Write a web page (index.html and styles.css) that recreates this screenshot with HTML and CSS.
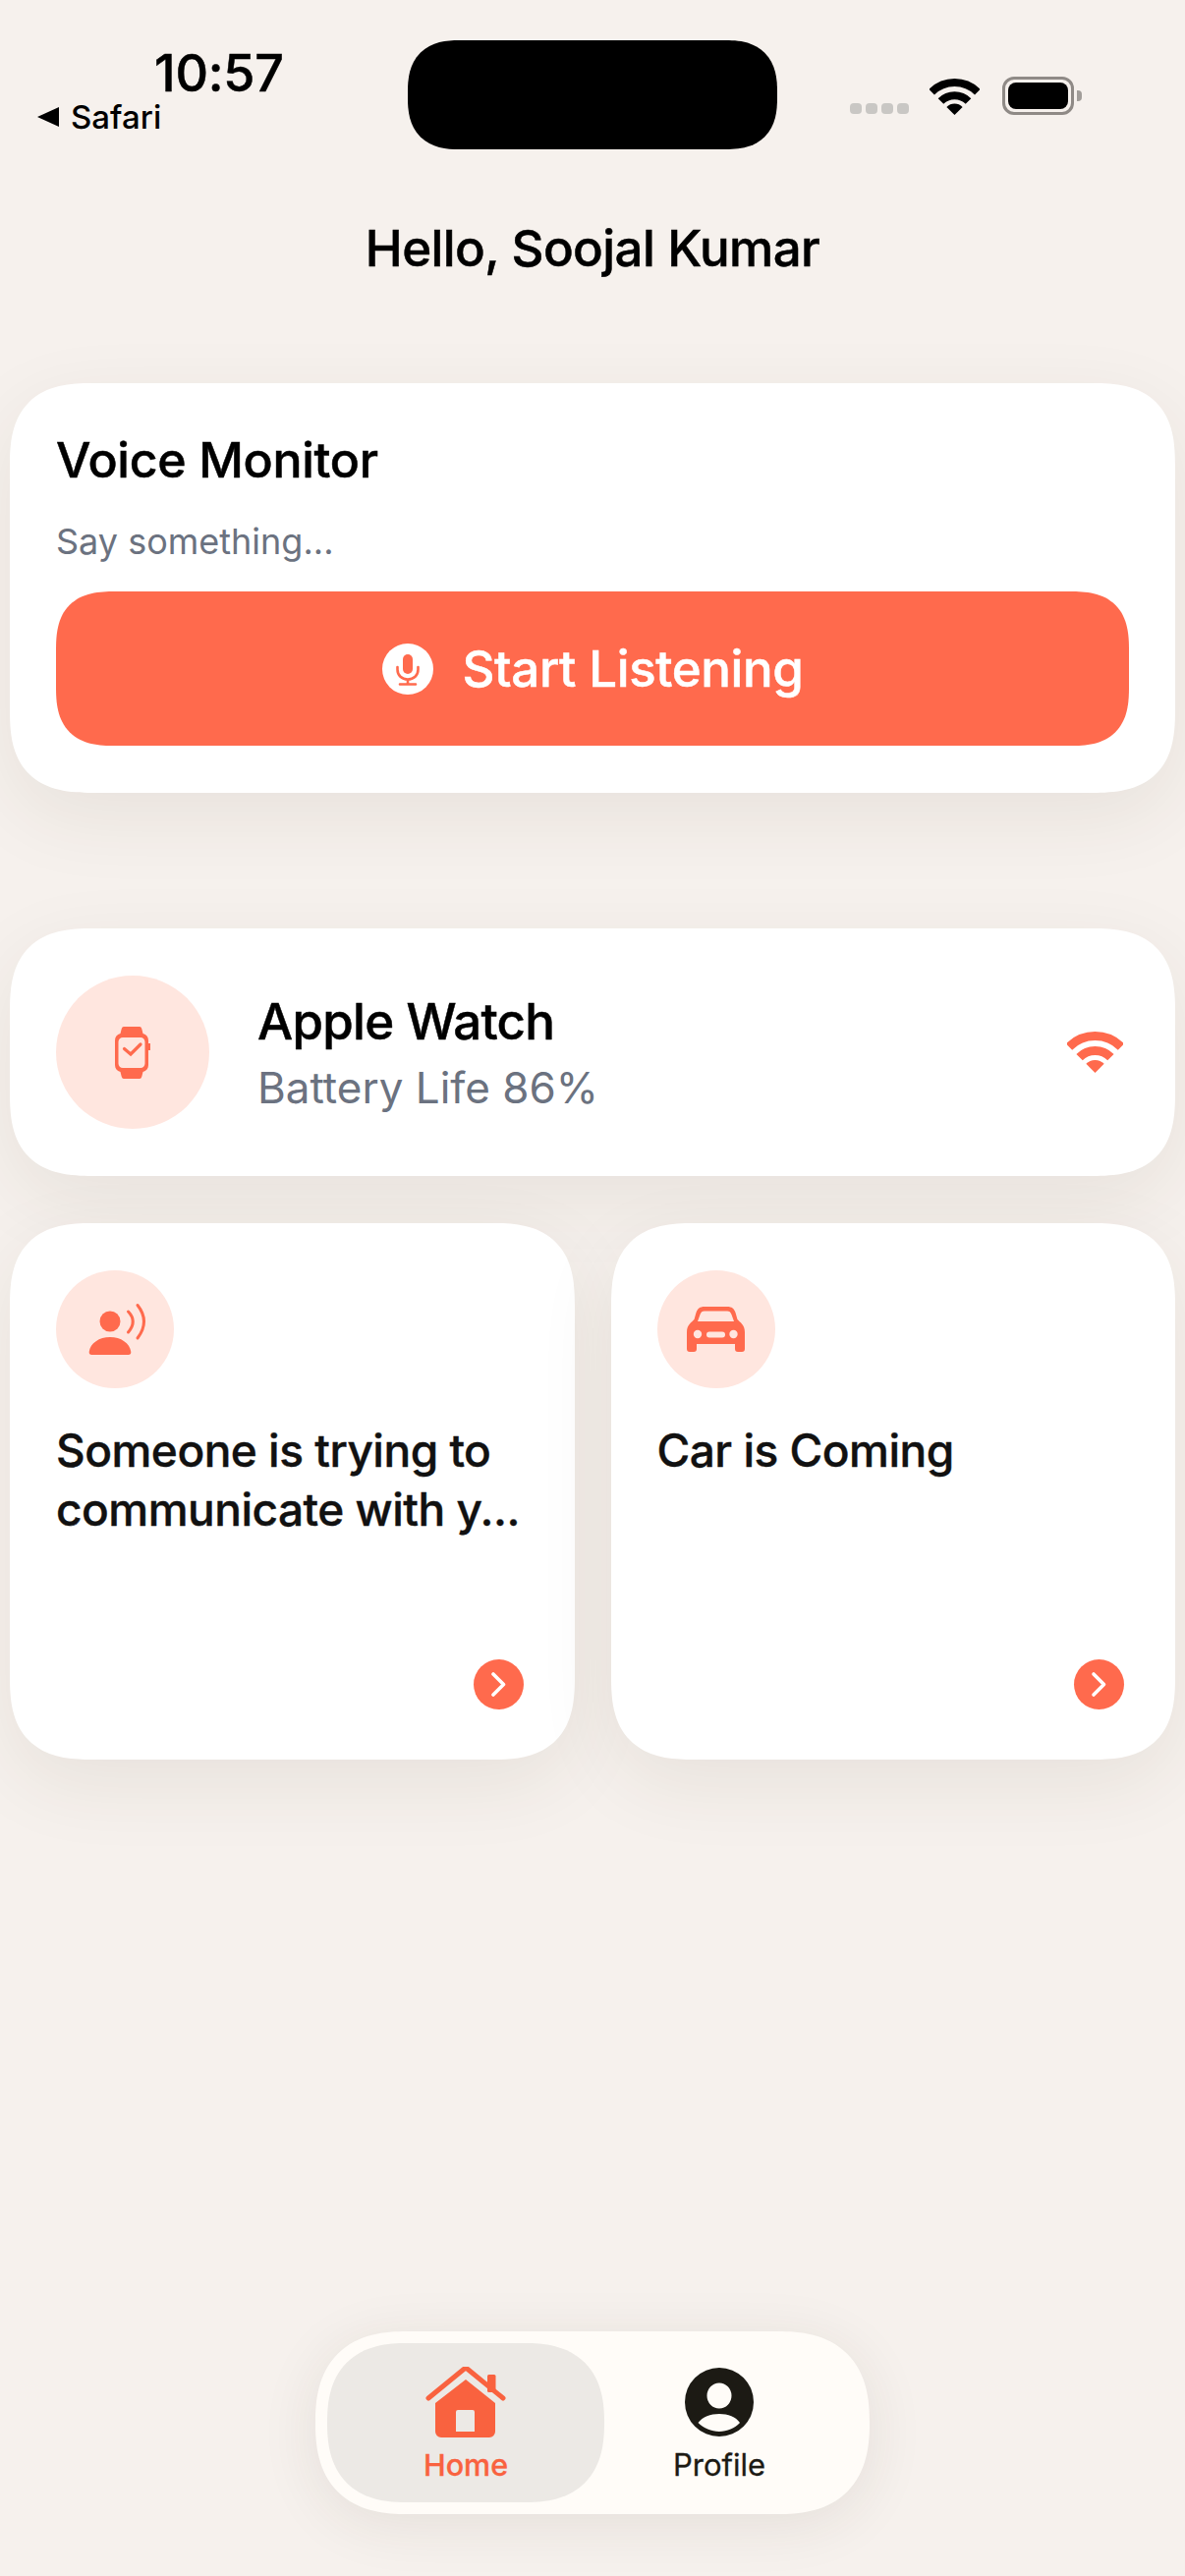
FILE: index.html
```html
<!DOCTYPE html>
<html lang="en">
<head>
    <meta charset="UTF-8">
    <meta name="viewport" content="width=device-width, initial-scale=1.0">
    <title>Home</title>
    <link rel="stylesheet" href="styles.css">
</head>
<body>
    <!-- status bar -->
    <div class="status">
        <div class="status-left">
            <div class="clock">10:57</div>
            <div class="back">
                <svg class="back-arrow" width="22" height="20" viewBox="0 0 22 20"><path d="M22 0V20L0 10Z"/></svg>
                <span>Safari</span>
            </div>
        </div>
        <div class="island"></div>
        <div class="status-right">
            <div class="dots"><i></i><i></i><i></i><i></i></div>
            <svg class="status-wifi" width="51" height="37" viewBox="0 0 57 42" fill="none" stroke="#000" stroke-width="9">
                <path d="M2 15.5A37.5 37.5 0 0 1 55 15.5"/>
                <path d="M12.6 26.1A22.5 22.5 0 0 1 44.4 26.1"/>
                <path d="M28.5 42L19.3 32.8A13 13 0 0 1 37.7 32.8Z" fill="#000" stroke="none"/>
            </svg>
            <div class="battery"><div class="battery-fill"></div></div>
            <div class="battery-nub"></div>
        </div>
    </div>

    <h1 class="greeting">Hello, Soojal Kumar</h1>

    <!-- voice monitor -->
    <section class="card voice">
        <h2 class="voice-title">Voice Monitor</h2>
        <p class="voice-hint">Say something...</p>
        <button class="listen-btn" type="button">
            <svg width="52" height="52" viewBox="0 0 52 52">
                <circle cx="26" cy="26" r="26" fill="#fff"/>
                <rect x="21" y="11" width="10" height="20" rx="5" fill="#ff6a4d"/>
                <path d="M15.5 24V26.5C15.5 32.5 20 36.5 26 36.5S36.5 32.5 36.5 26.5V24M26 36.5V41M18 41.5H34" fill="none" stroke="#ff6a4d" stroke-width="2.6" stroke-linecap="round"/>
            </svg>
            <span>Start Listening</span>
        </button>
    </section>

    <!-- watch -->
    <section class="card watch">
        <div class="icon-circle icon-circle-lg">
            <svg width="36" height="53" viewBox="0 0 36 53">
                <path fill="#ff6a4d" fill-rule="evenodd" d="M9 0H25C26.500 0 27 1 27.500 3L28.500 7C32 8 34 10.500 34 14V17H36V24H34V39C34 42.500 32 45 28.500 46L27.500 50C27 52 26.500 53 25 53H9C7.500 53 7 52 6.500 50L5.500 46C2 45 0 42.500 0 39V14C0 10.500 2 8 5.500 7L6.500 3C7 1 7.500 0 9 0ZM8 11C5.500 11 3.500 13 3.500 15.500V37.500C3.500 40 5.500 42 8 42H26C28.500 42 30.500 40 30.500 37.500V15.500C30.500 13 28.500 11 26 11Z"/>
                <path d="M9.500 22.500L16 28L26 18" fill="none" stroke="#ff6a4d" stroke-width="3.200" stroke-linecap="round"/>
            </svg>
        </div>
        <div class="watch-info">
            <div class="watch-name">Apple Watch</div>
            <div class="watch-battery">Battery Life 86%</div>
        </div>
        <svg class="watch-wifi" width="57" height="42" viewBox="0 0 57 42" fill="none" stroke="#ff6a4d" stroke-width="9">
            <path d="M2 15.5A37.5 37.5 0 0 1 55 15.5"/>
            <path d="M12.6 26.1A22.5 22.5 0 0 1 44.4 26.1"/>
            <path d="M28.5 42L19.3 32.8A13 13 0 0 1 37.7 32.8Z" fill="#ff6a4d" stroke="none"/>
        </svg>
    </section>

    <!-- alerts -->
    <div class="alerts">
        <section class="card alert">
            <div class="icon-circle">
                <svg class="person-icon" width="60" height="56" viewBox="-3 0 60 56">
                    <circle cx="22" cy="20" r="10.500" fill="#ff6a4d"/>
                    <path fill="#ff6a4d" d="M3.500 54H40.500A2.800 2.800 0 0 0 43.300 51C42 42 33 36 22 36S2 42 0.700 51A2.800 2.800 0 0 0 3.500 54Z"/>
                    <path d="M40.500 10Q50 20 40.500 31M50 3.500Q63 20 50 37" fill="none" stroke="#ff6a4d" stroke-width="3" stroke-linecap="round"/>
                </svg>
            </div>
            <p class="alert-text">Someone is trying to<br>communicate with y...</p>
            <div class="arrow">
                <svg width="51" height="51" viewBox="0 0 51 51"><path d="M20 15L30.500 25.500L20 36" fill="none" stroke="#fff" stroke-width="3.600" stroke-linecap="round" stroke-linejoin="round"/></svg>
            </div>
        </section>
        <section class="card alert">
            <div class="icon-circle">
                <svg width="59" height="46" viewBox="0 0 59 46">
                    <path fill="#ff6a4d" fill-rule="evenodd" d="M18 0H41C46 0 48 2 49.500 6L51.500 13C54 16 59 18 59 26V43A3 3 0 0 1 56 46H52A3 3 0 0 1 49 43V38H10V43A3 3 0 0 1 7 46H3A3 3 0 0 1 0 43V26C0 18 5 16 7.500 13L9.500 6C11 2 13 0 18 0ZM18 4.500C15.500 4.500 14.500 5.500 13.500 8L11 15H48L45.500 8C44.500 5.500 43.500 4.500 41 4.500Z"/>
                    <circle cx="11" cy="28" r="4.200" fill="#ffe6df"/>
                    <circle cx="47.500" cy="28" r="4.200" fill="#ffe6df"/>
                    <rect x="20" y="25.500" width="19" height="6" rx="3" fill="#ffe6df"/>
                </svg>
            </div>
            <p class="alert-text">Car is Coming</p>
            <div class="arrow">
                <svg width="51" height="51" viewBox="0 0 51 51"><path d="M20 15L30.500 25.500L20 36" fill="none" stroke="#fff" stroke-width="3.600" stroke-linecap="round" stroke-linejoin="round"/></svg>
            </div>
        </section>
    </div>

    <!-- tab bar -->
    <nav class="tabs">
        <div class="tab tab-active">
            <svg width="82" height="72" viewBox="0 0 82 72">
                <path d="M3 32L39 2.500Q41 1 43 2.500L79 32" fill="none" stroke="#f9623f" stroke-width="5" stroke-linecap="round"/>
                <rect x="63" y="8" width="8.500" height="18" rx="1.500" fill="#f9623f"/>
                <path fill="#f9623f" fill-rule="evenodd" d="M41 13L71 37V66A6 6 0 0 1 65 72H16A6 6 0 0 1 10 66V37ZM33 44A2 2 0 0 0 31 46V66H50V46A2 2 0 0 0 48 44Z"/>
            </svg>
            <span>Home</span>
        </div>
        <div class="tab tab-profile">
            <svg width="70" height="70" viewBox="0 0 70 70">
                <path fill="#1c1a14" fill-rule="evenodd" d="M35 0A35 35 0 1 1 35 70A35 35 0 1 1 35 0ZM35 15.500A12.500 13 0 1 0 35 41.500A12.500 13 0 1 0 35 15.500ZM13.500 56C19 61.500 27 65 35 65S51 61.500 56 56C52 50 44 47 35 47S18 50 13.500 56Z"/>
            </svg>
            <span>Profile</span>
        </div>
    </nav>
</body>
</html>
```

FILE: styles.css
```css
* {
    box-sizing: border-box;
}
body {
    margin: 0;
    height: 2622px;
    overflow: hidden;
    display: flex;
    flex-direction: column;
    background-color: #f6f1ed;
    color: #000;
    font-family: Inter, "Noto Sans", sans-serif;
}

/* status bar */
.status {
    display: flex;
    padding: 41px 0 0 38px;
}
.status-left {
    width: 377px;
}
.clock {
    margin: 8px 0 0 119px;
    font-size: 52px;
    line-height: 52px;
    font-weight: 500;
    letter-spacing: -0.2px;
    -webkit-text-stroke: 0.5px;
}
.back {
    display: flex;
    align-items: center;
    gap: 12px;
    font-size: 33px;
    line-height: 36px;
    font-weight: 500;
}
.island {
    width: 376px;
    height: 111px;
    border-radius: 52px;
    corner-shape: superellipse(1.3);
    background-color: #000;
}
.status-right {
    display: flex;
    align-items: flex-end;
    height: 39px;
    margin: 37px 0 0 74px;
}
.dots {
    display: flex;
    gap: 4px;
    margin-right: 21px;
    padding-bottom: 1px;
}
.dots i {
    width: 12px;
    height: 11px;
    border-radius: 4px;
    background-color: #c9c7c4;
}
.status-wifi {
    margin-right: 23px;
}
.battery {
    width: 73px;
    height: 39px;
    padding: 3px;
    border: 3px solid #8f8a86;
    border-radius: 12px;
}
.battery-fill {
    height: 100%;
    border-radius: 8px;
    background-color: #000;
}
.battery-nub {
    width: 5px;
    height: 11px;
    margin: 0 0 14px 3px;
    border-radius: 0 4px 4px 0;
    background-color: #a19d99;
}

.greeting {
    margin: 71px 0 0;
    text-align: center;
    font-size: 51px;
    line-height: 60px;
    font-weight: 500;
    letter-spacing: -0.6px;
    -webkit-text-stroke: 0.5px;
}

/* cards */
.card {
    background-color: #fff;
    border-radius: 84px;
    corner-shape: superellipse(1.4);
    box-shadow: 0 24px 80px rgba(70, 50, 30, 0.08);
}
.voice {
    margin: 107px 10px 0;
    padding: 48px 47px;
}
.voice-title {
    margin: 0;
    font-size: 50px;
    line-height: 60px;
    font-weight: 500;
    letter-spacing: -0.3px;
    -webkit-text-stroke: 0.5px;
}
.voice-hint {
    margin: 32px 0 0;
    color: #6b7280;
    font-size: 36px;
    line-height: 42px;
}
.listen-btn {
    display: flex;
    align-items: center;
    justify-content: center;
    gap: 30px;
    width: 100%;
    height: 157px;
    margin-top: 30px;
    border: none;
    border-radius: 60px;
    corner-shape: superellipse(1.4);
    background-color: #ff6a4d;
    color: #fff;
    font-family: inherit;
    font-size: 51px;
    font-weight: 500;
    letter-spacing: -0.4px;
    -webkit-text-stroke: 0.5px;
}

.watch {
    display: flex;
    align-items: center;
    margin: 138px 10px 0;
    padding: 48px 47px;
}
.icon-circle {
    display: flex;
    align-items: center;
    justify-content: center;
    width: 120px;
    height: 120px;
    border-radius: 50%;
    background-color: #ffe6df;
}
.icon-circle-lg {
    width: 156px;
    height: 156px;
}
.person-icon {
    overflow: visible;
}
.watch-info {
    margin-left: 49px;
}
.watch-name {
    font-size: 51px;
    line-height: 62px;
    font-weight: 500;
    letter-spacing: -0.7px;
    -webkit-text-stroke: 0.5px;
}
.watch-battery {
    margin-top: 10px;
    color: #6b7280;
    font-size: 44px;
    line-height: 52px;
}
.watch-wifi {
    margin-left: auto;
    margin-right: 6px;
}

.alerts {
    display: grid;
    grid-template-columns: minmax(0, 1fr) minmax(0, 1fr);
    gap: 37px;
    margin: 48px 10px 0;
}
.alert {
    display: flex;
    flex-direction: column;
    height: 546px;
    padding: 48px 52px 51px 47px;
}
.alert-text {
    margin: 33px 0 0;
    color: #111;
    font-size: 46px;
    line-height: 60px;
    font-weight: 500;
    letter-spacing: -0.5px;
    -webkit-text-stroke: 0.4px;
    white-space: nowrap;
}
.arrow {
    width: 51px;
    height: 51px;
    margin-top: auto;
    align-self: flex-end;
    border-radius: 50%;
    background-color: #ff6a4d;
}
.arrow svg {
    display: block;
}

/* tab bar */
.tabs {
    display: flex;
    align-self: center;
    width: 564px;
    height: 186px;
    margin-top: auto;
    margin-bottom: 63px;
    padding: 12px;
    border-radius: 93px;
    corner-shape: superellipse(1.3);
    background-color: #fffcf8;
    box-shadow: 0 10px 60px rgba(50, 40, 30, 0.09);
}
.tab {
    display: flex;
    flex-direction: column;
    align-items: center;
    width: 234px;
    padding-top: 24px;
    color: #1c1a14;
    font-size: 31px;
    line-height: 36px;
    font-weight: 400;
    -webkit-text-stroke: 0.3px;
}
.tab svg {
    display: block;
    margin-bottom: 10px;
}
.tab-profile {
    padding-top: 25px;
}
.tab-profile svg {
    margin-bottom: 11px;
}
.tab-active {
    width: 282px;
    height: 162px;
    border-radius: 81px;
    corner-shape: superellipse(1.3);
    background-color: #ece9e5;
    color: #f9623f;
    font-size: 30.500px;
    font-weight: 500;
}
```
